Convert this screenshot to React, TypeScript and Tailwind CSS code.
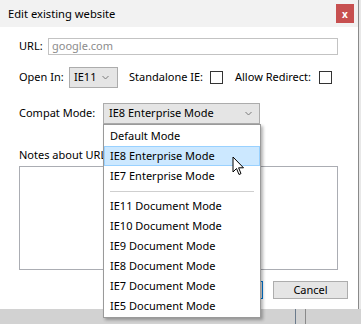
import React from "react";

const font = { fontFamily: '"Noto Sans", "Open Sans", sans-serif' };

const Chevron = () => (
  <svg width="7" height="5" viewBox="0 0 7 5" className="shrink-0">
    <path d="M0.5 1 L3.5 4 L6.5 1" fill="none" stroke="#7a7a7a" strokeWidth="1" />
  </svg>
);

const Checkbox = () => <div className="w-[13px] h-[13px] border border-[#333] bg-white shrink-0" />;

const modes = [
  "Default Mode",
  "IE8 Enterprise Mode",
  "IE7 Enterprise Mode",
  "-",
  "IE11 Document Mode",
  "IE10 Document Mode",
  "IE9 Document Mode",
  "IE8 Document Mode",
  "IE7 Document Mode",
  "IE5 Document Mode",
];

export default function App() {
  return (
    <div
      className="relative w-[361px] h-[324px] overflow-hidden bg-[#d2d2d2] text-[11px] text-black whitespace-nowrap"
      style={font}
    >
      <div className="flex">
        <div className="w-[358px] h-[309px] bg-white flex flex-col">
          {/* title bar */}
          <div className="h-[27px] bg-[#f2f2f2] flex items-center pl-[8px] pr-[4px]">
            <span className="text-[11.2px] flex-1 leading-none">Edit existing website</span>
            <div className="w-[18px] h-[19px] bg-[#c75050] flex items-center justify-center text-white text-[10px] font-bold leading-none">
              x
            </div>
          </div>

          {/* body */}
          <div className="flex flex-col pl-[19px] pr-[20px]">
            <div className="flex items-center mt-[11px] h-[17px]">
              <span className="w-[29px]">URL:</span>
              <div className="flex-1 h-[17px] border border-[#c3c3c3] flex items-center pl-[3px] text-[#8c8c8c]">
                google.com
              </div>
            </div>

            <div className="flex items-center mt-[12px] h-[21px]">
              <span className="w-[50px]">Open In:</span>
              <div className="w-[49px] h-[21px] bg-[#e5e5e5] border border-[#acacac] flex items-center pl-[4px] pr-[8px] justify-between">
                <span>IE11</span>
                <Chevron />
              </div>
              <span className="ml-[11px] w-[81px]">Standalone IE:</span>
              <Checkbox />
              <span className="ml-[12px] w-[84px]">Allow Redirect:</span>
              <Checkbox />
            </div>

            <div className="flex items-center mt-[15px] h-[21px]">
              <span className="w-[84px]">Compat Mode:</span>
              <div className="w-[157px] h-[21px] bg-[#e5e5e5] border border-[#acacac] flex items-center pl-[5px] pr-[7px] justify-between">
                <span>IE8 Enterprise Mode</span>
                <Chevron />
              </div>
            </div>

            <div className="mt-[23px] h-[17px] flex items-center">Notes about URL:</div>

            <div className="mt-[2px] h-[104px] border border-[#abadb3]" />

            <div className="mt-[11px] flex justify-end gap-[10px] mr-[-10px]">
              <div className="w-[71px] h-[18px] bg-[#e5e5e5] border border-[#0078d7]" />
              <div className="w-[75px] h-[18px] bg-[#e5e5e5] border border-[#adadad] flex items-center justify-center">
                Cancel
              </div>
            </div>
          </div>
        </div>
        <div className="w-[3px] h-[309px] border-l border-[#8a8a8a] bg-[#e8e8e8]" />
      </div>

      {/* lines below the dialog */}
      <div className="absolute left-[295px] top-[309px] w-[1px] h-[15px] bg-[#6b7b8c]" />
      <div className="absolute left-[305px] top-[309px] w-[1px] h-[15px] bg-[#8a8a8a]" />

      {/* dropdown overlay */}
      <div className="absolute left-[103px] top-[124px] w-[158px] bg-white border border-[#9a9a9a] shadow-[2px_2px_3px_rgba(0,0,0,0.3)] py-[1px]">
        {modes.map((m, i) =>
          m === "-" ? (
            <div key={i} className="h-[10px] flex items-center px-[6px]">
              <div className="h-px flex-1 bg-[#cfcfcf]" />
            </div>
          ) : (
            <div
              key={i}
              className={
                "h-[20px] flex items-center pl-[5px] border " +
                (i === 1 ? "bg-[#cce8ff] border-[#99d1ff]" : "border-transparent")
              }
            >
              {m}
            </div>
          )
        )}
      </div>

      {/* mouse cursor */}
      <svg className="absolute left-[232px] top-[156px]" width="13" height="21" viewBox="0 0 13 21">
        <path
          d="M1 1 L1 16 L4.5 12.5 L7 18.5 L9 17.6 L6.6 11.8 L11.5 11.8 Z"
          fill="white"
          stroke="black"
          strokeWidth="1"
        />
      </svg>
    </div>
  );
}
